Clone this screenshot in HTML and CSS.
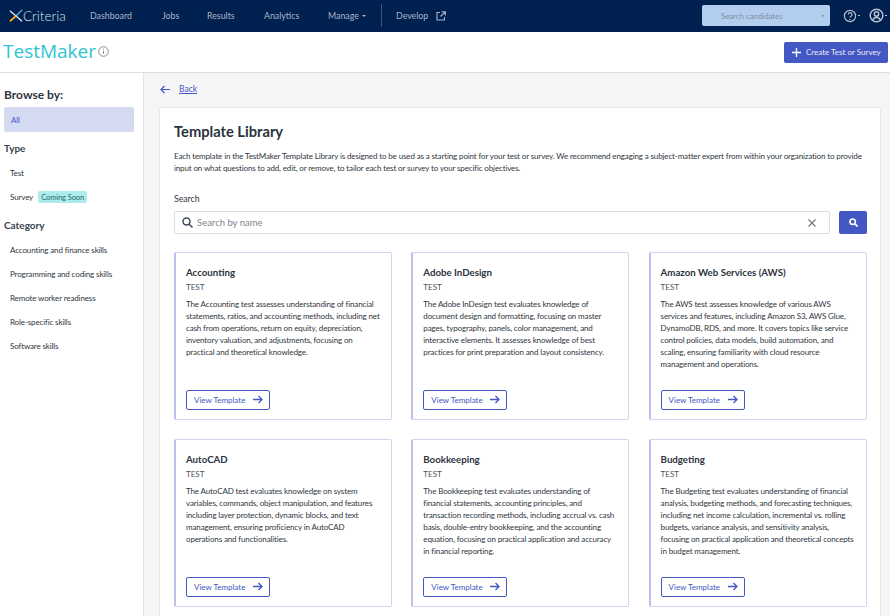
FILE: index.html
```html
<!DOCTYPE html>
<html lang="en">
<head>
<meta charset="utf-8">
<title>Template Library</title>
<link rel="stylesheet" href="styles.css">
</head>
<body>
<header class="topbar">
  <div class="logo">
    <svg class="logo-mark" width="14" height="14" viewBox="0 0 16 16" fill="none"><path d="M15 1 L8 8" stroke="#5fb6e6" stroke-width="1.6"/><path d="M1 2 L8 8" stroke="#e8eef5" stroke-width="1.4"/><path d="M8 8 L15 14" stroke="#e8eef5" stroke-width="1.4"/><path d="M8 8 L1 14" stroke="#f5a623" stroke-width="2"/></svg>
    <span class="logo-text">Criteria</span>
  </div>
  <nav class="nav">
    <a class="nav-link nav-dash">Dashboard</a>
    <a class="nav-link nav-jobs">Jobs</a>
    <a class="nav-link nav-results">Results</a>
    <a class="nav-link nav-analytics">Analytics</a>
    <a class="nav-link nav-manage">Manage <i class="caret"></i></a>
    <span class="nav-sep"></span>
    <a class="nav-link nav-dev">Develop
      <svg width="10" height="10" viewBox="0 0 10 10" fill="none" stroke="#a9b6ca" stroke-width="1.1"><path d="M4 1.5H1v7.5h7.5V6"/><path d="M5.5.7h3.8v3.8M9.2.8 4.5 5.5"/></svg>
    </a>
  </nav>
  <div class="top-right">
    <div class="cand"><span>Search candidates</span><i class="caret caret-dim"></i></div>
    <svg class="top-ico" width="14" height="14" viewBox="0 0 14 14" fill="none" stroke="#b5c0d0" stroke-width="1.2"><circle cx="7" cy="7" r="5.6"/><path d="M5.2 5.5a1.9 1.9 0 1 1 2.8 1.7c-.7.4-1 .7-1 1.4"/><path d="M7 9.9v1"/></svg>
    <i class="dash"></i>
    <svg class="top-ico user" width="15" height="15" viewBox="0 0 15 15" fill="none" stroke="#b5c0d0" stroke-width="1.5"><circle cx="7.5" cy="7.5" r="6.3"/><circle cx="7.5" cy="6" r="2.2"/><path d="M3.6 12c.8-1.800 2.200-2.500 3.900-2.500s3.100.7 3.900 2.500"/></svg>
    <i class="dash"></i>
  </div>
</header>

<div class="subbar">
  <div class="brand">
    <span class="brand-name">TestMaker</span>
    <svg width="11" height="11" viewBox="0 0 11 11" fill="none" stroke="#8a8f96"><circle cx="5.500" cy="5.500" r="4.800"/><path d="M5.500 4.800v3.200M5.500 2.600v1"/></svg>
  </div>
  <button class="create"><svg width="9" height="9" viewBox="0 0 9 9" stroke="#fff" stroke-width="1.300"><path d="M4.500 0v9M0 4.500h9"/></svg>Create Test or Survey</button>
</div>

<div class="layout">
  <aside class="side">
    <h2 class="browse">Browse by:</h2>
    <div class="side-all">All</div>
    <h3 class="side-h">Type</h3>
    <div class="side-item">Test</div>
    <div class="side-item">Survey <span class="soon">Coming Soon</span></div>
    <h3 class="side-h side-h-cat">Category</h3>
    <div class="side-item">Accounting and finance skills</div>
    <div class="side-item">Programming and coding skills</div>
    <div class="side-item">Remote worker readiness</div>
    <div class="side-item">Role-specific skills</div>
    <div class="side-item">Software skills</div>
  </aside>

  <main class="main">
    <div class="back">
      <svg width="10" height="9" viewBox="0 0 10 9" fill="none" stroke="#4358c4" stroke-width="1.200"><path d="M10 4.500H1M4.500 1 1 4.500 4.500 8"/></svg>
      <a class="back-link">Back</a>
    </div>
    <section class="panel">
      <h1 class="title">Template Library</h1>
      <p class="intro">Each template in the TestMaker Template Library is designed to be used as a starting point for your test or survey. We recommend engaging a subject-matter expert from within your organization to provide input on what questions to add, edit, or remove, to tailor each test or survey to your specific objectives.</p>
      <div class="search-label">Search</div>
      <div class="search-row">
        <div class="search-box">
          <svg width="11" height="11" viewBox="0 0 11 11" fill="none" stroke="#3f4a5a" stroke-width="1.500"><circle cx="4.500" cy="4.500" r="3.500"/><path d="M7.200 7.200 10.500 10.500"/></svg>
          <span class="search-ph">Search by name</span>
          <svg class="search-x" width="8" height="8" viewBox="0 0 8 8" stroke="#6d7682" stroke-width="1.100"><path d="M.5.500l7 7M7.500.500l-7 7"/></svg>
        </div>
        <button class="search-btn"><svg width="9" height="9" viewBox="0 0 11 11" fill="none" stroke="#fff" stroke-width="2"><circle cx="4.500" cy="4.500" r="3.300"/><path d="M7.200 7.200 10.500 10.500"/></svg></button>
      </div>
      <div class="grid">
        <article class="card">
          <h4 class="card-t">Accounting</h4>
          <div class="card-k">TEST</div>
          <p class="card-d">The Accounting test assesses understanding of financial statements, ratios, and accounting methods, including net cash from operations, return on equity, depreciation, inventory valuation, and adjustments, focusing on practical and theoretical knowledge.</p>
          <a class="view">View Template <svg width="10" height="9" viewBox="0 0 10 9" fill="none" stroke="#4358c4" stroke-width="1.300"><path d="M0 4.500h9M5.500 1 9 4.500 5.500 8"/></svg></a>
        </article>
        <article class="card">
          <h4 class="card-t">Adobe InDesign</h4>
          <div class="card-k">TEST</div>
          <p class="card-d">The Adobe InDesign test evaluates knowledge of document design and formatting, focusing on master pages, typography, panels, color management, and interactive elements. It assesses knowledge of best practices for print preparation and layout consistency.</p>
          <a class="view">View Template <svg width="10" height="9" viewBox="0 0 10 9" fill="none" stroke="#4358c4" stroke-width="1.300"><path d="M0 4.500h9M5.500 1 9 4.500 5.500 8"/></svg></a>
        </article>
        <article class="card">
          <h4 class="card-t">Amazon Web Services (AWS)</h4>
          <div class="card-k">TEST</div>
          <p class="card-d">The AWS test assesses knowledge of various AWS services and features, including Amazon S3, AWS Glue, DynamoDB, RDS, and more. It covers topics like service control policies, data models, build automation, and scaling, ensuring familiarity with cloud resource management and operations.</p>
          <a class="view">View Template <svg width="10" height="9" viewBox="0 0 10 9" fill="none" stroke="#4358c4" stroke-width="1.300"><path d="M0 4.500h9M5.500 1 9 4.500 5.500 8"/></svg></a>
        </article>
        <article class="card">
          <h4 class="card-t">AutoCAD</h4>
          <div class="card-k">TEST</div>
          <p class="card-d">The AutoCAD test evaluates knowledge on system variables, commands, object manipulation, and features including layer protection, dynamic blocks, and text management, ensuring proficiency in AutoCAD operations and functionalities.</p>
          <a class="view">View Template <svg width="10" height="9" viewBox="0 0 10 9" fill="none" stroke="#4358c4" stroke-width="1.300"><path d="M0 4.500h9M5.500 1 9 4.500 5.500 8"/></svg></a>
        </article>
        <article class="card">
          <h4 class="card-t">Bookkeeping</h4>
          <div class="card-k">TEST</div>
          <p class="card-d">The Bookkeeping test evaluates understanding of financial statements, accounting principles, and transaction recording methods, including accrual vs. cash basis, double-entry bookkeeping, and the accounting equation, focusing on practical application and accuracy in financial reporting.</p>
          <a class="view">View Template <svg width="10" height="9" viewBox="0 0 10 9" fill="none" stroke="#4358c4" stroke-width="1.300"><path d="M0 4.500h9M5.500 1 9 4.500 5.500 8"/></svg></a>
        </article>
        <article class="card">
          <h4 class="card-t">Budgeting</h4>
          <div class="card-k">TEST</div>
          <p class="card-d">The Budgeting test evaluates understanding of financial analysis, budgeting methods, and forecasting techniques, including net income calculation, incremental vs. rolling budgets, variance analysis, and sensitivity analysis, focusing on practical application and theoretical concepts in budget management.</p>
          <a class="view">View Template <svg width="10" height="9" viewBox="0 0 10 9" fill="none" stroke="#4358c4" stroke-width="1.300"><path d="M0 4.500h9M5.500 1 9 4.500 5.500 8"/></svg></a>
        </article>
      </div>
    </section>
  </main>
</div>
</body>
</html>
```

FILE: styles.css
```css
* { box-sizing: border-box; }
html, body { margin: 0; height: 616px; overflow: hidden; }
body { font-family: Lato, "Noto Sans", sans-serif; color: #2b3340; background: #fff; font-size: 8.500px; }

.topbar { height: 32px; background: #002050; display: flex; align-items: center; padding-left: 9px; color: #a9b6ca; }
.logo { display: flex; align-items: center; width: 81px; }
.logo-text { font-size: 13.500px; font-weight: 300; color: #dfe6ef; }
.nav { display: flex; align-items: center; height: 100%; font-size: 8.800px; padding-bottom: 1px; }
.nav-link { display: flex; align-items: center; gap: 7px; }
.nav-dash { width: 72px; }
.nav-jobs { width: 45px; }
.nav-results { width: 57px; }
.nav-analytics { width: 64px; }
.nav-manage { width: 53px; gap: 3px; }
.nav-sep { width: 1px; height: 23px; background: #3b5478; }
.nav-dev { margin-left: 14px; gap: 8px; }
.caret { display: inline-block; border: 2px solid transparent; border-top: 2px solid #a9b6ca; border-bottom: 0; }
.caret-dim { border-top-color: #8a9bb3; }
.top-right { margin-left: auto; display: flex; align-items: center; padding: 0 3px 1px 0; }
.cand { width: 128px; height: 21px; border-radius: 2px; background: #b3cdee; color: #7e8fa6; font-size: 7.800px; display: flex; align-items: center; justify-content: space-between; padding: 0 5px 0 19px; margin-right: 13px; }
.top-ico { display: block; }
.user { margin-left: 9px; }
.dash { width: 2px; height: 1px; margin-left: 1px; background: #b5c0d0; }

.subbar { height: 41px; border-bottom: 1px solid #dfdfdf; display: flex; align-items: center; justify-content: space-between; padding: 0 2px 2px 3px; }
.brand { display: flex; align-items: center; gap: 2px; }
.brand-name { font-family: "Open Sans", Lato, sans-serif; font-size: 19px; color: #2fc4d2; }
.create { height: 21px; width: 104px; border: 0; border-radius: 2px; background: #4358c4; color: #e8ecf8; font: 8px Lato, sans-serif; display: flex; align-items: center; gap: 5px; padding: 0 0 0 8px; white-space: nowrap; margin-top: 2px; }

.layout { display: flex; height: 543px; }
.side { width: 144px; flex: none; border-right: 1px solid #e3e3e3; padding: 0 9px 0 3px; font-size: 8px; letter-spacing: -.13px; }
.browse { margin: 15px 0 5px 1px; font-size: 12px; font-weight: 700; color: #2f3640; line-height: 14px; letter-spacing: 0; }
.side-all { height: 25px; background: #d5daf3; border-radius: 2px; color: #4358c4; display: flex; align-items: center; padding-left: 7px; margin-left: 1px; }
.side-h { margin: 9px 0 0 1px; font-size: 10px; font-weight: 700; color: #3a4250; line-height: 15px; letter-spacing: 0; }
.side-h + .side-item { margin-top: 5px; }
.side-item { height: 24px; display: flex; align-items: center; padding-left: 7px; color: #2f3640; white-space: nowrap; }
.soon { margin-left: 5px; background: #aeecec; color: #256b72; border-radius: 2px; padding: 0 3px; line-height: 12px; font-size: 7.600px; }

.main { flex: 1; background: #f5f5f5; padding: 0 9px 0 15px; min-width: 0; }
.back { height: 34px; display: flex; align-items: center; gap: 9px; padding: 0 0 2px 1px; }
.back-link { color: #4358c4; text-decoration: underline; }
.panel { background: #fff; border: 1px solid #e9e9e9; border-radius: 2px; padding: 14px 13px 0 14px; height: 520px; }
.title { margin: 0; font-size: 14.700px; font-weight: 700; color: #2b3340; line-height: 18px; }
.intro { margin: 10px 0 0; line-height: 12px; font-size: 8px; letter-spacing: -.13px; color: #2f3640; }
.search-label { margin-top: 19px; line-height: 12px; color: #2f3640; font-size: 8.700px; }
.search-row { display: flex; margin-top: 6px; gap: 9px; }
.search-box { flex: 1; height: 23px; border: 1px solid #d9dde4; border-radius: 2px; display: flex; align-items: center; padding: 0 13px 0 7px; gap: 4px; }
.search-ph { color: #7d858f; font-size: 9.500px; }
.search-x { margin-left: auto; }
.search-btn { width: 28px; height: 23px; border: 0; border-radius: 2px; background: #4358c4; display: flex; align-items: center; justify-content: center; padding: 0; }
.grid { display: grid; grid-template-columns: repeat(3, 218px); column-gap: 19.300px; grid-auto-rows: 168px; row-gap: 19px; margin-top: 18px; }
.card { border: 1px solid #d0d6f2; border-left: 2px solid #b9c2ec; border-radius: 2px; padding: 13px 10px 9.500px 10px; display: flex; flex-direction: column; align-items: flex-start; }
.card-t { margin: 0; font-size: 9.700px; font-weight: 700; line-height: 12px; color: #2b3340; }
.card-k { margin-top: 4px; line-height: 11px; font-size: 8px; color: #4a5360; }
.card-d { margin: 5px 0 0; font-size: 8px; letter-spacing: -.13px; line-height: 12px; color: #2f3640; }
.view { margin-top: auto; width: 84px; height: 20px; border: 1px solid #4358c4; border-radius: 2px; color: #4358c4; display: flex; align-items: center; justify-content: space-between; padding: 0 6px 0 7px; font-size: 8px; }
```
